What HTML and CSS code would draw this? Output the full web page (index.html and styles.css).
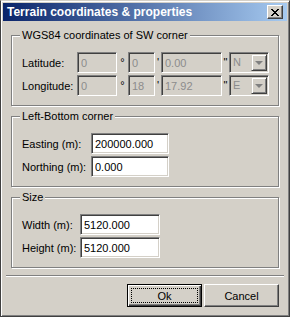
FILE: index.html
```html
<!DOCTYPE html>
<html lang="en">
<head>
    <meta charset="UTF-8">
    <title>Terrain coordinates &amp; properties</title>
    <link rel="stylesheet" href="styles.css">
</head>
<body>
    <div class="window">
        <div class="titlebar">
            <span class="title">Terrain coordinates &amp; properties</span>
            <button class="close" title="Close">
                <svg width="8" height="7" viewBox="0 0 8 7" shape-rendering="crispEdges">
                    <path fill="#000" d="M0 0h2v1H0zM6 0h2v1H6zM1 1h2v1H1zM5 1h2v1H5zM2 2h4v1H2zM3 3h2v1H3zM2 4h4v1H2zM1 5h2v1H1zM5 5h2v1H5zM0 6h2v1H0zM6 6h2v1H6z"/>
                </svg>
            </button>
        </div>

        <div class="content">
            <fieldset class="group">
                <legend>WGS84 coordinates of SW corner</legend>
                <div class="row">
                    <label class="lbl lbl-wgs">Latitude:</label>
                    <input class="field f-deg" disabled value="0">
                    <span class="sym sym-deg">°</span>
                    <input class="field f-min" disabled value="0">
                    <span class="sym sym-min">'</span>
                    <input class="field f-sec" disabled value="0.00">
                    <span class="sym sym-sec">"</span>
                    <div class="combo">
                        <span class="combo-text">N</span>
                        <span class="combo-btn"><span class="arrow"></span></span>
                    </div>
                </div>
                <div class="row">
                    <label class="lbl lbl-wgs">Longitude:</label>
                    <input class="field f-deg" disabled value="0">
                    <span class="sym sym-deg">°</span>
                    <input class="field f-min" disabled value="18">
                    <span class="sym sym-min">'</span>
                    <input class="field f-sec" disabled value="17.92">
                    <span class="sym sym-sec">"</span>
                    <div class="combo">
                        <span class="combo-text">E</span>
                        <span class="combo-btn"><span class="arrow"></span></span>
                    </div>
                </div>
            </fieldset>

            <fieldset class="group">
                <legend>Left-Bottom corner</legend>
                <div class="row">
                    <label class="lbl lbl-corner">Easting (m):</label>
                    <input class="field f-corner" value="200000.000">
                </div>
                <div class="row">
                    <label class="lbl lbl-corner">Northing (m):</label>
                    <input class="field f-corner" value="0.000">
                </div>
            </fieldset>

            <fieldset class="group">
                <legend>Size</legend>
                <div class="row">
                    <label class="lbl lbl-size">Width (m):</label>
                    <input class="field f-size" value="5120.000">
                </div>
                <div class="row">
                    <label class="lbl lbl-size">Height (m):</label>
                    <input class="field f-size" value="5120.000">
                </div>
            </fieldset>

            <div class="separator"></div>

            <div class="buttons">
                <button class="btn btn-default"><span class="focus">Ok</span></button>
                <button class="btn">Cancel</button>
            </div>
        </div>
    </div>
</body>
</html>
```

FILE: styles.css
```css
html, body {
    margin: 0;
    padding: 0;
}
body {
    width: 290px;
    height: 317px;
    overflow: hidden;
    background: #d4d0c8;
    font-family: "Liberation Sans", Arial, sans-serif;
    font-size: 11px;
    color: #000;
}
.window {
    box-sizing: border-box;
    width: 290px;
    height: 317px;
    padding: 2px;
    background: #d4d0c8;
    border: 1px solid;
    border-color: #d4d0c8 #404040 #404040 #404040;
    box-shadow: inset 1px 1px #fff, inset -1px -1px #808080;
}
.titlebar {
    display: flex;
    align-items: center;
    justify-content: space-between;
    height: 18px;
    padding: 0 4px;
    background: linear-gradient(to right, #0a246a, #a6caf0);
}
.title {
    color: #fff;
    font-weight: bold;
    font-size: 12px;
    white-space: nowrap;
}
.close {
    box-sizing: border-box;
    display: flex;
    align-items: center;
    justify-content: center;
    width: 16px;
    height: 14px;
    padding: 0 1px 0 0;
    background: #d4d0c8;
    border: 1px solid;
    border-color: #fff #404040 #404040 #fff;
    box-shadow: inset -1px -1px #808080, inset 1px 1px #d4d0c8;
}
.close svg {
    display: block;
}
.content {
    padding: 8px 8px 0;
}
.group {
    margin: 0;
    padding: 10px 9px 9px 10px;
    border: 1px solid #808080;
    box-shadow: inset 1px 1px #fff, 1px 1px #fff;
}
.group + .group {
    margin-top: 4px;
}
.group legend {
    margin-left: -2px;
    padding: 0 2px;
    line-height: 13px;
    background: #d4d0c8;
}
.row {
    display: flex;
    align-items: center;
    height: 21px;
}
.row + .row {
    margin-top: 2px;
}
.lbl {
    flex: none;
    white-space: nowrap;
}
.lbl-wgs { width: 55px; }
.lbl-corner { width: 69px; }
.lbl-size { width: 58px; }

.field {
    box-sizing: border-box;
    flex: none;
    height: 21px;
    margin: 0;
    padding: 0 3px;
    font-family: inherit;
    font-size: 11px;
    color: #000;
    background: #fff;
    border: 1px solid;
    border-color: #808080 #fff #fff #808080;
    box-shadow: inset 1px 1px #404040, inset -1px -1px #d4d0c8;
    outline: none;
}
.field:disabled {
    background: #d4d0c8;
    color: #8c8c8c;
}
.f-deg { width: 40px; }
.f-min { width: 27px; }
.f-sec { width: 61px; }
.f-corner { width: 78px; }
.f-size { width: 80px; }

.sym {
    flex: none;
    align-self: flex-start;
    padding-top: 4px;
    text-align: center;
}
.sym-deg { width: 11px; }
.sym-min { width: 6px; }
.sym-sec { width: 7px; }

.combo {
    box-sizing: border-box;
    display: flex;
    width: 40px;
    height: 21px;
    padding: 1px;
    border: 1px solid;
    border-color: #808080 #fff #fff #808080;
    box-shadow: inset 1px 1px #404040, inset -1px -1px #d4d0c8;
}
.combo-text {
    flex: 1;
    padding-left: 2px;
    line-height: 17px;
    color: #8c8c8c;
}
.combo-btn {
    box-sizing: border-box;
    display: flex;
    align-items: center;
    justify-content: center;
    width: 16px;
    height: 17px;
    background: #d4d0c8;
    border: 1px solid;
    border-color: #d4d0c8 #404040 #404040 #d4d0c8;
    box-shadow: inset 1px 1px #fff, inset -1px -1px #808080;
}
.arrow {
    width: 0;
    height: 0;
    border-left: 4px solid transparent;
    border-right: 4px solid transparent;
    border-top: 4px solid #808080;
}

.separator {
    height: 1px;
    margin: 7px -5px 0;
    background: #808080;
    border-bottom: 1px solid #fff;
}
.buttons {
    display: flex;
    justify-content: flex-end;
    gap: 2px;
    margin-top: 7px;
}
.btn {
    box-sizing: border-box;
    width: 75px;
    height: 23px;
    padding: 0;
    font-family: inherit;
    font-size: 11px;
    color: #000;
    background: #d4d0c8;
    border: 1px solid;
    border-color: #fff #404040 #404040 #fff;
    box-shadow: inset -1px -1px #808080, inset 1px 1px #d4d0c8;
}
.btn-default {
    display: flex;
    padding: 3px;
    border-color: #000;
    box-shadow: inset 1px 1px #fff, inset -1px -1px #404040, inset -2px -2px #808080;
}
.focus {
    flex: 1;
    display: flex;
    align-items: center;
    justify-content: center;
    border: 1px dotted #000;
}
```
